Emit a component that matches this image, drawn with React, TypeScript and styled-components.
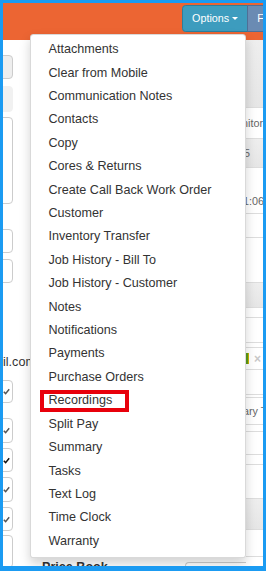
import React from "react";
import styled, { createGlobalStyle } from "styled-components";

const Global = createGlobalStyle`
  html, body { margin: 0; padding: 0; background: #fff; }
  body { font-family: "Liberation Sans", Arial, sans-serif; }
`;

const Frame = styled.div`
  position: relative;
  width: 266px;
  height: 571px;
  box-sizing: border-box;
  border-style: solid;
  border-color: #1b9bf2;
  border-width: 3px 3px 5px 3px;
  overflow: hidden;
  background: #fff;
  display: flex;
  flex-direction: column;
  font-family: "Liberation Sans", Arial, sans-serif;
`;

const Header = styled.header`
  flex: none;
  height: 37px;
  box-sizing: border-box;
  background: #ec6533;
  display: flex;
  align-items: flex-start;
  padding: 2px 0 0 179px;
  overflow: hidden;
`;

const BtnGroup = styled.div`
  display: flex;
  flex: none;
`;

const OptionsBtn = styled.button`
  flex: none;
  height: 27px;
  box-sizing: border-box;
  margin: 0;
  padding: 0 9px;
  background: #3d9cbe;
  border: 1px solid #2c7f9d;
  border-radius: 3.6px 0 0 3.6px;
  color: #fff;
  font: 10.8px/1 "Liberation Sans", Arial, sans-serif;
  display: flex;
  align-items: center;
  gap: 3px;
`;

const Caret = styled.span`
  width: 0;
  height: 0;
  border-left: 3.6px solid transparent;
  border-right: 3.6px solid transparent;
  border-top: 3.6px solid #fff;
`;

const NextBtn = styled(OptionsBtn)`
  width: 40px;
  margin-left: -1px;
  background: #6a8bb3;
  border-color: #4f6f96;
  border-radius: 0;
`;

const Body = styled.main`
  flex: 1;
  min-height: 0;
  display: flex;
`;

const LeftCol = styled.div`
  flex: none;
  width: 27px;
  display: flex;
  flex-direction: column;
  color: #333;
`;

type Tone = "disabled" | "soft" | "plain";

const Field = styled.div<{ $h: number; $top: number; $tone?: Tone }>`
  flex: none;
  width: 70px;
  margin-left: -60px;
  margin-top: ${(p) => p.$top}px;
  height: ${(p) => p.$h}px;
  box-sizing: border-box;
  border: 1px solid ${(p) => (p.$tone === "soft" ? "#f1f1f1" : "#cccccc")};
  border-radius: 4px;
  background: ${(p) =>
    p.$tone === "disabled" ? "#eeeeee" : p.$tone === "soft" ? "#f1f1f1" : "#ffffff"};
  display: flex;
  align-items: center;
  justify-content: flex-end;
  padding-right: 2px;
`;

const FieldText = styled.div<{ $top: number }>`
  margin-top: ${(p) => p.$top}px;
  height: 18px;
  line-height: 18px;
  font-size: 12.6px;
  color: #333;
  white-space: nowrap;
`;

const MidCol = styled.div`
  flex: 1;
  min-width: 0;
  display: flex;
  flex-direction: column;
`;

const Hidden = styled.div`
  flex: none;
  height: 517.6px;
`;

const PriceRow = styled.div`
  flex: none;
  display: flex;
  align-items: flex-start;
  padding-left: 12px;
`;

const PriceLabel = styled.div`
  width: 143px;
  font-size: 12.6px;
  line-height: 18px;
  font-weight: bold;
  color: #333;
  white-space: nowrap;
`;

const PriceBox = styled.div`
  flex: 1;
  margin-top: 4.4px;
  height: 24px;
  border: 1px solid #cccccc;
  border-right: none;
  border-radius: 4px 0 0 4px;
`;

const RightCol = styled.div`
  flex: none;
  width: 17px;
  display: flex;
  flex-direction: column;
  overflow: hidden;
`;

const Row = styled.div<{ $h: number; $grey?: boolean; $low?: boolean }>`
  flex: none;
  height: ${(p) => p.$h}px;
  box-sizing: border-box;
  border-bottom: 1px solid #dddddd;
  background: ${(p) => (p.$grey ? "linear-gradient(#eeeeee, #e6e6e6)" : "#ffffff")};
  display: flex;
  align-items: ${(p) => (p.$low ? "flex-end" : "center")};
  padding-bottom: ${(p) => (p.$low ? "6px" : "0")};
  font-size: 10.8px;
  color: #666;
  white-space: nowrap;
`;

const RowText = styled.span<{ $shift: number }>`
  margin-left: ${(p) => p.$shift}px;
`;

const Swatch = styled.span`
  width: 2px;
  height: 11px;
  background: #5a9a1a;
  border-right: 1px solid #c8b400;
`;

const CloseX = styled.span`
  margin-left: 5px;
  color: #c8c8c8;
  font-size: 12px;
  font-weight: bold;
`;

const Menu = styled.ul`
  position: absolute;
  top: 31px;
  left: 27px;
  width: 216px;
  box-sizing: border-box;
  margin: 0;
  padding: 3.2px 0 3.5px;
  list-style: none;
  background: #fff;
  border: 1px solid rgba(0, 0, 0, 0.15);
  border-radius: 3.6px;
  box-shadow: 0 5.4px 10.8px rgba(0, 0, 0, 0.175);
  z-index: 10;
`;

const Item = styled.li`
  position: relative;
  height: 23.41px;
  line-height: 23.41px;
  padding: 0 17.5px;
  font-size: 12.6px;
  color: #333;
  white-space: nowrap;
`;

const Highlight = styled.span`
  position: absolute;
  left: 9px;
  top: 1px;
  width: 89px;
  height: 22px;
  box-sizing: border-box;
  border: 4px solid #e8000b;
`;

const Check = ({ dark }: { dark?: boolean }) => (
  <svg width="7" height="7" viewBox="0 0 7 7">
    <path d="M0.8 3.8 L2.6 5.6 L6.2 1.2" fill="none" stroke={dark ? "#111" : "#555"} strokeWidth="1.5" />
  </svg>
);

const items = [
  "Attachments",
  "Clear from Mobile",
  "Communication Notes",
  "Contacts",
  "Copy",
  "Cores & Returns",
  "Create Call Back Work Order",
  "Customer",
  "Inventory Transfer",
  "Job History - Bill To",
  "Job History - Customer",
  "Notes",
  "Notifications",
  "Payments",
  "Purchase Orders",
  "Recordings",
  "Split Pay",
  "Summary",
  "Tasks",
  "Text Log",
  "Time Clock",
  "Warranty",
];

type RowData = { h: number; grey?: boolean; text?: string; shift?: number; low?: boolean; tag?: boolean };

const rows: RowData[] = [
  { h: 68, grey: true },
  { h: 31, text: "nitor", shift: -4 },
  { h: 29, grey: true, text: "5", shift: -2 },
  { h: 46, text: "1:06", shift: -3, low: true },
  { h: 24 },
  { h: 45 },
  { h: 25, grey: true },
  { h: 10 },
  { h: 25 },
  { h: 5 },
  { h: 22, tag: true },
  { h: 25 },
  { h: 3 },
  { h: 27, text: "ary T", shift: -3 },
  { h: 7 },
  { h: 23 },
  { h: 10 },
  { h: 34 },
  { h: 31, grey: true },
  { h: 27 },
];

export default function App() {
  return (
    <>
      <Global />
      <Frame>
        <Header>
          <BtnGroup>
            <OptionsBtn>
              Options <Caret />
            </OptionsBtn>
            <NextBtn>F</NextBtn>
          </BtnGroup>
        </Header>
        <Body>
          <LeftCol>
            <Field $top={15} $h={24} $tone="disabled" />
            <Field $top={7} $h={26} $tone="soft" />
            <Field $top={5} $h={87} />
            <Field $top={25} $h={24} />
            <Field $top={6} $h={24} />
            <FieldText $top={70}>il.com</FieldText>
            <Field $top={9} $h={23}>
              <Check />
            </Field>
            <Field $top={15} $h={25}>
              <Check />
            </Field>
            <Field $top={5} $h={24}>
              <Check dark />
            </Field>
            <Field $top={5} $h={25}>
              <Check />
            </Field>
            <Field $top={5} $h={24}>
              <Check />
            </Field>
            <Field $top={4} $h={33} />
          </LeftCol>
          <MidCol>
            <Hidden />
            <PriceRow>
              <PriceLabel>Price Book</PriceLabel>
              <PriceBox />
            </PriceRow>
          </MidCol>
          <RightCol>
            {rows.map((r, i) => (
              <Row key={i} $h={r.h} $grey={r.grey} $low={r.low}>
                {r.tag && (
                  <>
                    <Swatch />
                    <CloseX>×</CloseX>
                  </>
                )}
                {r.text && <RowText $shift={r.shift ?? 0}>{r.text}</RowText>}
              </Row>
            ))}
          </RightCol>
        </Body>
        <Menu>
          {items.map((it) => (
            <Item key={it}>
              {it}
              {it === "Recordings" && <Highlight />}
            </Item>
          ))}
        </Menu>
      </Frame>
    </>
  );
}
